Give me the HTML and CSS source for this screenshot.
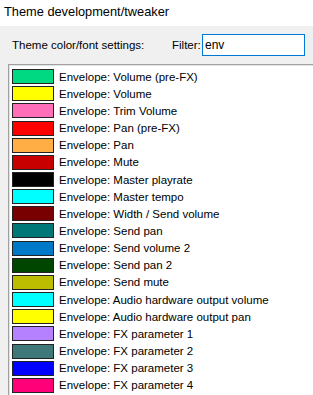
FILE: index.html
```html
<!DOCTYPE html>
<html lang="en">
<head>
    <meta charset="UTF-8">
    <title>Theme development/tweaker</title>
    <link rel="stylesheet" href="styles.css">
</head>
<body>
    <div class="titlebar">Theme development/tweaker</div>

    <div class="panel">
        <div class="toolbar">
            <span class="label">Theme color/font settings:</span>
            <span class="filter-label">Filter:</span>
            <input class="filter" type="text" value="env">
        </div>

        <!-- color list -->
        <ul class="list">
            <li><span class="swatch" style="background:#00d982"></span>Envelope: Volume (pre-FX)</li>
            <li><span class="swatch" style="background:#ffff00"></span>Envelope: Volume</li>
            <li><span class="swatch" style="background:#ff6eb9"></span>Envelope: Trim Volume</li>
            <li><span class="swatch" style="background:#ff0000"></span>Envelope: Pan (pre-FX)</li>
            <li><span class="swatch" style="background:#ffae45"></span>Envelope: Pan</li>
            <li><span class="swatch" style="background:#c80000"></span>Envelope: Mute</li>
            <li><span class="swatch" style="background:#000000"></span>Envelope: Master playrate</li>
            <li><span class="swatch" style="background:#00ffff"></span>Envelope: Master tempo</li>
            <li><span class="swatch" style="background:#780000"></span>Envelope: Width / Send volume</li>
            <li><span class="swatch" style="background:#007878"></span>Envelope: Send pan</li>
            <li><span class="swatch" style="background:#0078c8"></span>Envelope: Send volume 2</li>
            <li><span class="swatch" style="background:#004600"></span>Envelope: Send pan 2</li>
            <li><span class="swatch" style="background:#bdbd00"></span>Envelope: Send mute</li>
            <li><span class="swatch" style="background:#00ffff"></span>Envelope: Audio hardware output volume</li>
            <li><span class="swatch" style="background:#ffff00"></span>Envelope: Audio hardware output pan</li>
            <li><span class="swatch" style="background:#b681ff"></span>Envelope: FX parameter 1</li>
            <li><span class="swatch" style="background:#3e7878"></span>Envelope: FX parameter 2</li>
            <li><span class="swatch" style="background:#0000ff"></span>Envelope: FX parameter 3</li>
            <li><span class="swatch" style="background:#ff0078"></span>Envelope: FX parameter 4</li>
        </ul>
    </div>
</body>
</html>
```

FILE: styles.css
```css
body {
    margin: 0;
    font-family: "Liberation Sans", Arial, sans-serif;
    font-size: 11.5px;
    color: #000;
    background-color: #f0f0f0;
    overflow: hidden;
}
.titlebar {
    height: 26px;
    line-height: 24px;
    padding-left: 4px;
    font-size: 12.8px;
    background-color: #fff;
}
.panel {
    padding-left: 8px;
}
.toolbar {
    display: flex;
    align-items: center;
    height: 38px;
    padding-left: 4px;
}
.label {
    width: 160px;
}
.filter-label {
    width: 30px;
}
.filter {
    width: 97px;
    height: 20px;
    margin: 0;
    padding: 0 2px;
    border: 1px solid #0078d7;
    font-family: "Liberation Sans", Arial, sans-serif;
    font-size: 12px;
    outline: none;
}
.list {
    list-style: none;
    margin: 0;
    padding: 3px 0 0 3px;
    height: 340px;
    border-top: 1px solid #a0a0a0;
    border-left: 1px solid #a0a0a0;
    box-shadow: inset 1px 1px 0 #e3e3e3;
    background-color: #fff;
}
.list li {
    display: flex;
    align-items: center;
    height: 17.17px;
}
.swatch {
    width: 40px;
    height: 13px;
    margin-right: 5px;
    border: 1px solid #222;
}
```
